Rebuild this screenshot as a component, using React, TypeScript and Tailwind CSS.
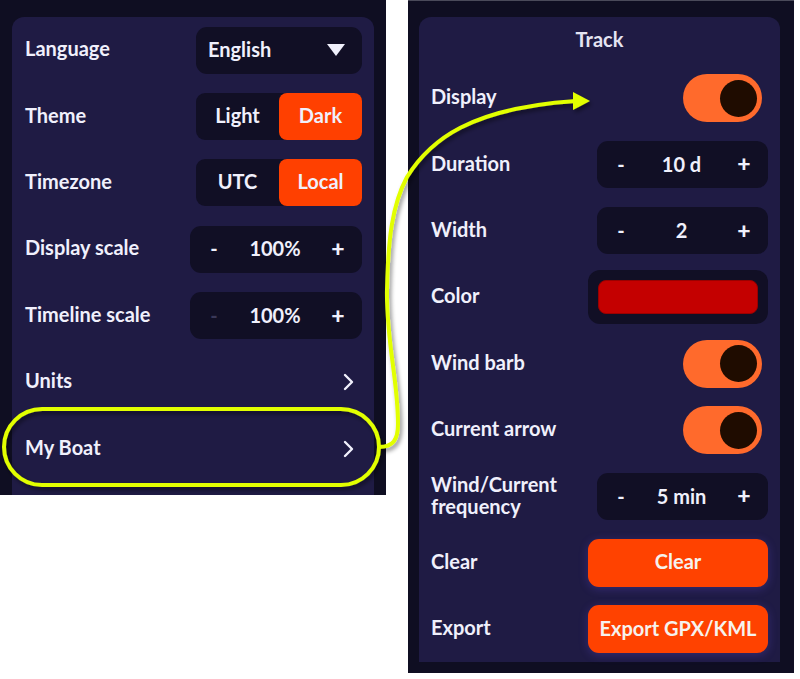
import React from 'react';

const font = { fontFamily: 'Lato, "Noto Sans", sans-serif' };

function Row({ label, children, twoLine }: { label: React.ReactNode; children?: React.ReactNode; twoLine?: boolean }) {
  return (
    <div className="h-[66.4px] flex items-center justify-between">
      <span className={`mb-[4px] text-[20px] font-bold text-[#f0f0fc] ${twoLine ? 'leading-[22px]' : 'leading-none'}`}>{label}</span>
      {children}
    </div>
  );
}

function Stepper({ value, minusDisabled, wide }: { value: string; minusDisabled?: boolean; wide?: boolean }) {
  return (
    <div className={`h-[47px] ${wide ? 'w-[172px]' : 'w-[171px]'} rounded-[11px] bg-[#110f25] flex items-center pl-[19px] pr-[17px] text-[20px] font-bold text-[#f0f0fc]`}>
      <span className={`mb-[2px] w-[10px] text-center ${minusDisabled ? 'text-[#3a3858]' : ''}`}>-</span>
      <span className="mb-[2px] flex-1 text-center">{value}</span>
      <span className="mb-[2px] w-[14px] text-center text-[23px] font-black">+</span>
    </div>
  );
}

function Segmented({ left, right }: { left: string; right: string }) {
  return (
    <div className="h-[47px] w-[166px] rounded-[9px] bg-[#110f25] flex text-[20px] font-bold text-[#f0f0fc]">
      <div className="flex-1 flex items-center justify-center pb-[3px]">{left}</div>
      <div className="w-[83px] rounded-[8px] bg-[#ff4000] flex items-center justify-center pb-[3px]">{right}</div>
    </div>
  );
}

function Toggle() {
  return (
    <div className="mr-[6px] h-[48px] w-[79px] rounded-full bg-[#ff6a2c] flex items-center justify-end pr-[5px]">
      <div className="w-[37px] h-[37px] rounded-full bg-[#1f0c00]" />
    </div>
  );
}

function Chevron() {
  return (
    <svg width="14" height="18" viewBox="0 0 14 18" className="mr-[6px]">
      <polyline points="3,2 10,9 3,16" fill="none" stroke="#f0f0fc" strokeWidth="2.4" strokeLinecap="round" strokeLinejoin="round" />
    </svg>
  );
}

function OrangeButton({ children }: { children: React.ReactNode }) {
  return (
    <div className="h-[48px] w-[180px] rounded-[11px] bg-[#ff4200] flex items-center justify-center pb-[3px] text-[20px] font-bold text-[#f6f2ee] shadow-[0_2px_10px_rgba(120,90,255,0.25)]">
      {children}
    </div>
  );
}

export default function App() {
  return (
    <div className="relative w-[800px] h-[679px] bg-white flex items-start" style={font}>
      {/* left screenshot */}
      <div className="w-[386px] h-[495px] bg-[#0f0e22] pt-[17px] pl-[12px] pr-[12px]">
        <div className="bg-[#1f1b44] rounded-t-[12px] h-[478px] pl-[13px] pr-[12px]">
          <Row label="Language">
            <div className="h-[47px] w-[166px] rounded-[11px] bg-[#110f25] flex items-center justify-between pl-[12px] pr-[17px] text-[20px] font-bold text-[#f0f0fc]">
              <span className="mb-[3px]">English</span>
              <svg width="18" height="13" viewBox="0 0 18 13">
                <polygon points="0,0 18,0 9,12" fill="#f0f0fc" />
              </svg>
            </div>
          </Row>
          <Row label="Theme">
            <Segmented left="Light" right="Dark" />
          </Row>
          <Row label="Timezone">
            <Segmented left="UTC" right="Local" />
          </Row>
          <Row label="Display scale">
            <Stepper value="100%" wide />
          </Row>
          <Row label="Timeline scale">
            <Stepper value="100%" wide minusDisabled />
          </Row>
          <Row label="Units">
            <Chevron />
          </Row>
          <Row label="My Boat">
            <Chevron />
          </Row>
        </div>
      </div>

      {/* right screenshot */}
      <div className="ml-[22px] w-[386px] h-[673px] bg-[#0f0e22] border-t border-[#4a4a5a] pt-[16px] pl-[11px] pr-[14px]">
        <div className="bg-[#1f1b44] rounded-t-[12px] h-[645px] pl-[12px] pr-[12px]">
          <div className="h-[48px] flex items-center justify-center pb-[4px] text-[20px] font-bold text-[#e4e4f2]">Track</div>
          <Row label="Display">
            <Toggle />
          </Row>
          <Row label="Duration">
            <Stepper value="10 d" />
          </Row>
          <Row label="Width">
            <Stepper value="2" />
          </Row>
          <Row label="Color">
            <div className="h-[54px] w-[180px] rounded-[12px] bg-[#110f25] p-[10px]">
              <div className="h-full w-full rounded-[8px] bg-[#c40000] border border-[#9a0000]" />
            </div>
          </Row>
          <Row label="Wind barb">
            <Toggle />
          </Row>
          <Row label="Current arrow">
            <Toggle />
          </Row>
          <Row label={<>Wind/Current<br />frequency</>} twoLine>
            <Stepper value="5 min" />
          </Row>
          <Row label="Clear">
            <OrangeButton>Clear</OrangeButton>
          </Row>
          <Row label="Export">
            <OrangeButton>Export GPX/KML</OrangeButton>
          </Row>
        </div>
      </div>

      {/* highlight annotation */}
      <svg className="absolute inset-0 pointer-events-none" width="800" height="679" viewBox="0 0 800 679">
        <defs>
          <filter id="sh" x="-20%" y="-20%" width="140%" height="140%">
            <feDropShadow dx="2" dy="3" stdDeviation="2" floodColor="#000" floodOpacity="0.45" />
          </filter>
        </defs>
        <g filter="url(#sh)" stroke="#e2ff00" strokeWidth="4" fill="none" strokeLinecap="round">
          <rect x="4" y="409" width="375" height="76" rx="38" />
          <path d="M 379 447 C 393 447 398 440 398 424 C 398 380 386 340 387 290 C 388 240 392 205 407 177 C 430 140 470 108 576 101" />
          <polygon points="573,92 590,101 573,110" fill="#e2ff00" stroke="none" />
        </g>
      </svg>
    </div>
  );
}
